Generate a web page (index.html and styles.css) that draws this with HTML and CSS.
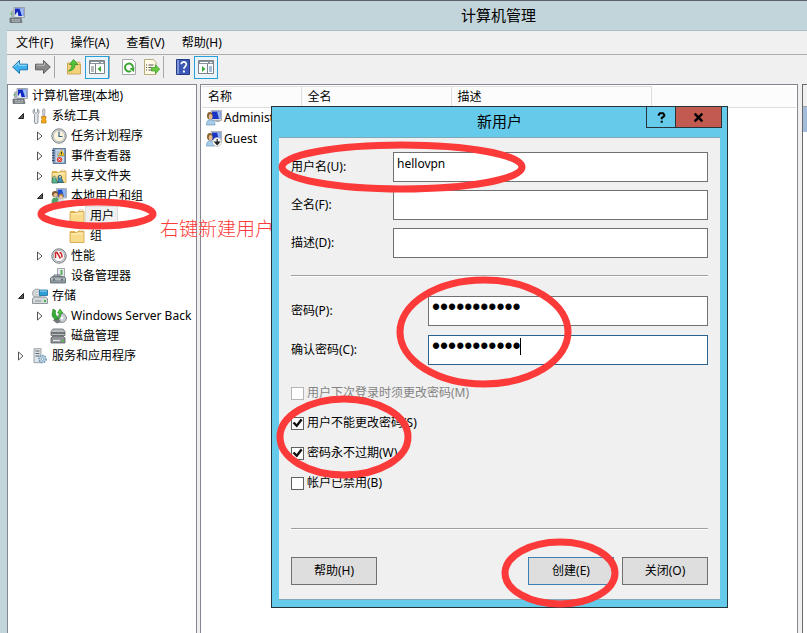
FILE: index.html
```html
<!DOCTYPE html>
<html lang="zh-CN">
<head>
    <meta charset="UTF-8">
    <meta name="viewport" content="width=device-width, initial-scale=1.0">
    <title>计算机管理</title>
    <link rel="stylesheet" href="styles.css">
</head>
<body>
    <svg class="sprite" aria-hidden="true">
        <symbol id="i-computer" viewBox="0 0 16 16">
            <path d="M5 .5h10.500v10H5z" fill="#d5d9dc" stroke="#8d969c" stroke-width=".8"/>
            <path d="M6 1.500h8.500V9H6z" fill="#1229c4"/>
            <path d="M10.500 1.500h4V9h-1.500z" fill="#9fc0f5"/>
            <path d="M2 4l3-1v7H2z" fill="#aab4b8"/>
            <path d="M1.500 6h1.500v1.500H1.500z" fill="#3fbf3f"/>
            <path d="M5 9.500l3.500-5 1 5z" fill="#dfe8f5"/>
            <path d="M1 11h11l1 4.500H1z" fill="#7c8488" stroke="#5f666a" stroke-width=".7"/>
            <path d="M3 12.500h2M6 12.500h2M9 12.500h2M3 14.200h8" stroke="#c3c9cc" stroke-width=".8"/>
        </symbol>
        <symbol id="i-tools" viewBox="0 0 16 16">
            <path d="M2.500 1v3l1.500 1.500L5.500 4V1C7.500 2 7.500 5 6 6.500V14a1.500 1.500 0 0 1-3.500 0V6.500C.5 5 .5 2 2.500 1z" fill="#e4e7e9" stroke="#7a8288" stroke-width=".8"/>
            <path d="M11 1h1.500l.5 2-.5 5h-1.500l-.5-5z" fill="#d9dcde" stroke="#8d9398" stroke-width=".7"/>
            <path d="M9.500 8.500h4.500v2l-.7.800.7 1V15h-4.500v-2.700l.7-1-.7-.8z" fill="#f5a918" stroke="#b87408" stroke-width=".7"/>
        </symbol>
        <symbol id="i-clock" viewBox="0 0 16 16">
            <circle cx="8" cy="8" r="7.200" fill="#d6d8d9" stroke="#7b8084" stroke-width="1"/>
            <circle cx="8" cy="8" r="5.600" fill="#fbf4da" stroke="#a9adaf" stroke-width=".7"/>
            <path d="M8 3.500V8.500h3.500" fill="none" stroke="#35618f" stroke-width="1.200"/>
        </symbol>
        <symbol id="i-event" viewBox="0 0 16 16">
            <path d="M2 .5h12.500v15H2z" fill="#7f9bbd" stroke="#4a6688" stroke-width=".8"/>
            <path d="M4.500 1.500H13v13H4.500z" fill="#c9d8e8"/>
            <path d="M5.500 4h3M5.500 6h2.500M5.500 8h7" stroke="#7f93ab" stroke-width=".7"/>
            <path d="M1 2.500h2.500M1 5h2.500M1 7.500h2.500M1 10h2.500M1 12.500h2.500" stroke="#35496a" stroke-width="1"/>
            <path d="M10.500 2l3 5.500h-6z" fill="#fbd12c" stroke="#a98308" stroke-width=".6"/>
            <path d="M10.500 4v2.500" stroke="#222" stroke-width=".9"/>
            <circle cx="8.500" cy="11.500" r="2.600" fill="#de3b2f"/>
            <path d="M7.400 10.500l2.200 2m0-2l-2.200 2" stroke="#fff" stroke-width=".8"/>
        </symbol>
        <symbol id="i-folder" viewBox="0 0 16 16">
            <path d="M1 3h5l1 1.500V14H1z" fill="#e7b84e"/>
            <path d="M10 2h4v3h-4z" fill="#fff" stroke="#c8b173" stroke-width=".6"/>
            <path d="M1 4.500h6.500L9 3.500h6V14.500H1z" fill="#f8dc8c" stroke="#d0a03c" stroke-width=".8"/>
            <path d="M2 5.800h12" stroke="#fff1bd" stroke-width="1"/>
        </symbol>
        <symbol id="i-share" viewBox="0 0 16 16">
            <use href="#i-folder"/>
            <path d="M1.500 9.500q2-2.500 3.500 0v1.500l2 4H1z" fill="#53b894" stroke="#26594f" stroke-width=".7"/>
            <path d="M7 8.500q2-2.500 3.500 0v2l2 4H7z" fill="#3c8fb5" stroke="#244b60" stroke-width=".7"/>
            <path d="M2.500 9.500h2M8 8.800h2" stroke="#eec49b" stroke-width="1.600"/>
        </symbol>
        <symbol id="i-user" viewBox="0 0 16 16">
            <path d="M5 .5h10.500v10H5z" fill="#d8dcdf" stroke="#929a9f" stroke-width=".7"/>
            <path d="M6 1.500h8.500V9H6z" fill="#1a35c4"/>
            <path d="M11 1.500h3.500V9H13z" fill="#93b5ee"/>
            <path d="M10 10.500h3l1 1.500h-5z" fill="#a5adb1"/>
            <ellipse cx="3.800" cy="5.800" rx="2.800" ry="3.800" fill="#8a6534"/>
            <ellipse cx="4.600" cy="6.800" rx="1.900" ry="2.700" fill="#e8bd92"/>
            <path d="M.5 15c0-4 1.500-5.200 4-5.200s4.500 1.200 4.500 5.200z" fill="#a7cdea" stroke="#6796bd" stroke-width=".7"/>
        </symbol>
        <symbol id="i-guest" viewBox="0 0 16 16">
            <use href="#i-user"/>
            <circle cx="11.200" cy="11" r="4.500" fill="#f6f6f6" stroke="#b0b0b0" stroke-width=".6"/>
            <path d="M11.200 8v5M9 11l2.200 2.500L13.400 11z" fill="#222" stroke="#222" stroke-width="1.200"/>
        </symbol>
        <symbol id="i-group" viewBox="0 0 16 16">
            <path d="M5.500.5h10v9.500h-10z" fill="#d8dcdf" stroke="#929a9f" stroke-width=".7"/>
            <path d="M6.500 1.500h8V9h-8z" fill="#1a4fd4"/>
            <path d="M11 1.500h3.500V9H13z" fill="#8db8f0"/>
            <circle cx="4" cy="6" r="3" fill="#7a5426"/>
            <circle cx="4.500" cy="7" r="2" fill="#e9be94"/>
            <path d="M.5 15c0-4 1.500-5.500 4-5.500s4 1.500 4 5.500z" fill="#4fa36a"/>
            <circle cx="10" cy="8" r="2.600" fill="#a4763a"/>
            <circle cx="10" cy="9" r="1.800" fill="#f0c9a3"/>
            <path d="M6.500 15.500c0-3.500 1.300-4.800 3.700-4.800s4 1.300 4 4.800z" fill="#d3dde6"/>
        </symbol>
        <symbol id="i-perf" viewBox="0 0 16 16">
            <circle cx="8" cy="8" r="7.200" fill="#dadcdd" stroke="#74797d" stroke-width="1"/>
            <circle cx="8" cy="8" r="5.600" fill="#fff" stroke="#8c9195" stroke-width=".7"/>
            <path d="M4.500 10V5l1.500-.5 3.500 6M8.500 4.500c1.500 0 2.500 2 2.500 5" fill="none" stroke="#c8262b" stroke-width="1.500"/>
        </symbol>
        <symbol id="i-device" viewBox="0 0 16 16">
            <path d="M7.500.5h7v9h-7z" fill="#e7eaec" stroke="#8c9499" stroke-width=".8"/>
            <path d="M10.500 2h2v5h-2z" fill="#55a95b"/>
            <path d="M4 8.500V7h6v1.500" fill="none" stroke="#59646b" stroke-width="1"/>
            <path d="M.5 10L2.500 8.500h11l2 1.500v5H.5z" fill="#8f999f" stroke="#59646b" stroke-width=".8"/>
            <path d="M1 11h14" stroke="#cfd6da" stroke-width="1"/>
            <path d="M4 10.500v2M12 10.500v2" stroke="#3d474d" stroke-width="1.200"/>
        </symbol>
        <symbol id="i-storage" viewBox="0 0 16 16">
            <circle cx="5" cy="5.500" r="4.500" fill="#d3d7da" stroke="#8e959a" stroke-width=".8"/>
            <circle cx="5" cy="5.500" r="1.300" fill="#fff" stroke="#999" stroke-width=".5"/>
            <path d="M7.500 2h8v5.500h-8z" fill="#2d9fd8" stroke="#1b6c99" stroke-width=".8"/>
            <path d="M8 3h7" stroke="#9bd9f5" stroke-width="1"/>
            <path d="M.5 10.500l2-1.500h11l2 1.500v5H.5z" fill="#d4d9dc" stroke="#798187" stroke-width=".8"/>
            <path d="M3 13h6" stroke="#8a9298"/><path d="M12 12h2v2h-2z" fill="#45b83f"/>
        </symbol>
        <symbol id="i-backup" viewBox="0 0 16 16">
            <circle cx="11" cy="10" r="4.500" fill="#c9cdd0" stroke="#72797e" stroke-width=".8"/>
            <circle cx="11" cy="10" r="1.400" fill="#fff"/>
            <path d="M6 8l4 6-4 1.500-4-3z" fill="#71797e"/>
            <path d="M1 7L2 1l2.500 1.500C4 6 5 8 7 9.500L6 12C3 11 1.500 9.500 1 7z" fill="#35ad35" stroke="#1d7b23" stroke-width=".6"/>
            <path d="M6.500 5l2.500-4 3 4h-2c0 3-1 5-2.500 6 .5-2 .7-4 .7-6z" fill="#54cc3d" stroke="#1d7b23" stroke-width=".6"/>
        </symbol>
        <symbol id="i-disk" viewBox="0 0 16 16">
            <path d="M3 1h10l2 2.500v4H1v-4z" fill="#b7bbbe" stroke="#63686c" stroke-width=".8"/>
            <path d="M1 5h14" stroke="#54595d" stroke-width="1.400"/>
            <path d="M3 8h10l2 2v5H1v-5z" fill="#8f9497" stroke="#575c60" stroke-width=".8"/>
            <path d="M3 12.500h7" stroke="#e4e6e7" stroke-width="1.200"/>
            <path d="M12 12h2v1.500h-2z" fill="#4cc23f"/>
        </symbol>
        <symbol id="i-service" viewBox="0 0 16 16">
            <path d="M2 .7h7v14H2z" fill="#dfe5e9" stroke="#858f96" stroke-width=".8"/>
            <path d="M3.500 3h4M3.500 5.500h4M3.500 8h4" stroke="#59656d" stroke-width="1"/>
            <circle cx="10.500" cy="11" r="3.500" fill="#c6dcec" stroke="#6d93b1" stroke-width="1.600" stroke-dasharray="1.600 1"/>
            <circle cx="10.500" cy="11" r="1.300" fill="#fff" stroke="#6d93b1" stroke-width=".8"/>
        </symbol>
        <symbol id="i-closed" viewBox="0 0 8 10">
            <path d="M1.500 1l4.500 4-4.500 4z" fill="#fff" stroke="#555" stroke-width="1"/>
        </symbol>
        <symbol id="i-open" viewBox="0 0 8 10">
            <path d="M6.500 2.500v5h-5z" fill="#595959" stroke="#262626" stroke-width="1"/>
        </symbol>
        <symbol id="i-back" viewBox="0 0 16 16">
            <path d="M.7 8L7.500 1.500v3.700h8v5.600h-8v3.700z" fill="#3db0ee" stroke="#2277ad" stroke-width="1"/>
            <path d="M2.500 7.500L6.700 3.700V6.300h8" fill="none" stroke="#a5e0fa" stroke-width="1"/>
        </symbol>
        <symbol id="i-forward" viewBox="0 0 16 16">
            <path d="M15.300 8L8.500 1.500v3.700h-8v5.600h8v3.700z" fill="#8a8a8a" stroke="#5f5f5f" stroke-width="1"/>
            <path d="M1.500 6.300h7.800V3.700" fill="none" stroke="#b9b9b9" stroke-width="1"/>
        </symbol>
        <symbol id="i-up" viewBox="0 0 16 16">
            <path d="M1.500 4h6L9 5.500h5.500v9.500h-13z" fill="#f3d27b" stroke="#c59b3f" stroke-width=".8"/>
            <path d="M10 3h4v2.500h-4z" fill="#f8e2a4" stroke="#c59b3f" stroke-width=".6"/>
            <path d="M2.500 12c2.500-1.500 3.500-4 3.300-6.500H3.500L7.500.5l4.500 5H9c0 4-2.500 6.500-6.500 6.500z" fill="#51c43a" stroke="#2b8a22" stroke-width=".7"/>
        </symbol>
        <symbol id="i-pane-left" viewBox="0 0 16 16">
            <path d="M.5 1.500h15v13H.5z" fill="#fff" stroke="#7b8389"/>
            <path d="M1 2h14v3H1z" fill="#8c959b"/>
            <path d="M2 3.500h8M12 3.500h2" stroke="#fff"/>
            <path d="M6.500 5v9.500" stroke="#7b8389"/>
            <path d="M2 8h3M2 10h3M2 12h3" stroke="#69747c"/>
            <path d="M12 7v6L8.500 10z" fill="#3aa935"/>
        </symbol>
        <symbol id="i-pane-right" viewBox="0 0 16 16">
            <path d="M.5 1.500h15v13H.5z" fill="#fff" stroke="#7b8389"/>
            <path d="M1 2h14v3H1z" fill="#8c959b"/>
            <path d="M2 3.500h8M12 3.500h2" stroke="#fff"/>
            <path d="M9.500 5v9.500" stroke="#7b8389"/>
            <path d="M11 8h3M11 10h3M11 12h3" stroke="#4f7fb5"/>
            <path d="M4 7v6L7.500 10z" fill="#3aa935"/>
        </symbol>
        <symbol id="i-refresh" viewBox="0 0 16 16">
            <path d="M1.500.5h10l3 3v12h-13z" fill="#fff" stroke="#a3a8ab"/>
            <path d="M12 8.500a4 4 0 1 0-2 3.500" fill="none" stroke="#39a52f" stroke-width="1.900"/>
            <path d="M8.500 9.500l4.500 3.800.3-5.300z" fill="#39a52f"/>
        </symbol>
        <symbol id="i-export" viewBox="0 0 16 16">
            <path d="M.5.5h9l2.500 3v12H.5z" fill="#fffbe6" stroke="#b9ab7d"/>
            <path d="M2 6h1M4.500 6h5M2 8.500h1M4.500 8.500h3M2 11h1M4.500 11h3" stroke="#555"/>
            <path d="M7.500 8.500h4V5.700l4.200 4.500-4.200 4.500V12h-4z" fill="#67cb3f" stroke="#3d9327" stroke-width=".7"/>
        </symbol>
        <symbol id="i-help" viewBox="0 0 16 16">
            <path d="M1.500.5h13v15h-13z" fill="#3a57b5" stroke="#263b86"/>
            <path d="M2 1h2v14H2z" fill="#7e93d8"/>
            <path d="M6.300 5.300c0-3.300 5.200-3 5 .2-.1 2-2.400 2.200-2.400 4.300" fill="none" stroke="#fff" stroke-width="1.800"/>
            <path d="M7.900 11.500h2v2h-2z" fill="#fff"/>
        </symbol>
    </svg>

    <div class="window">
        <header class="titlebar">
            <svg class="icon"><use href="#i-computer"/></svg>
            <h1>计算机管理</h1>
        </header>

        <main class="frame">
            <nav class="menubar">
                <a href="#">文件(F)</a>
                <a href="#">操作(A)</a>
                <a href="#">查看(V)</a>
                <a href="#">帮助(H)</a>
            </nav>

            <div class="toolbar">
                <button type="button" class="tool" aria-label="后退"><svg class="icon"><use href="#i-back"/></svg></button>
                <button type="button" class="tool" aria-label="前进"><svg class="icon"><use href="#i-forward"/></svg></button>
                <span class="divider"></span>
                <button type="button" class="tool" aria-label="向上一级"><svg class="icon"><use href="#i-up"/></svg></button>
                <button type="button" class="tool active" aria-label="显示/隐藏控制台树"><svg class="icon"><use href="#i-pane-left"/></svg></button>
                <span class="divider"></span>
                <button type="button" class="tool" aria-label="刷新"><svg class="icon"><use href="#i-refresh"/></svg></button>
                <button type="button" class="tool" aria-label="导出列表"><svg class="icon"><use href="#i-export"/></svg></button>
                <span class="divider"></span>
                <button type="button" class="tool" aria-label="帮助"><svg class="icon"><use href="#i-help"/></svg></button>
                <button type="button" class="tool active" aria-label="显示/隐藏操作窗格"><svg class="icon"><use href="#i-pane-right"/></svg></button>
            </div>

            <div class="panes">
                <div class="tree">
                    <div class="node root"><svg class="icon"><use href="#i-computer"/></svg><span>计算机管理(本地)</span></div>
                    <ul>
                        <li>
                            <div class="node"><svg class="arrow"><use href="#i-open"/></svg><svg class="icon"><use href="#i-tools"/></svg><span>系统工具</span></div>
                            <ul>
                                <li><div class="node"><svg class="arrow"><use href="#i-closed"/></svg><svg class="icon"><use href="#i-clock"/></svg><span>任务计划程序</span></div></li>
                                <li><div class="node"><svg class="arrow"><use href="#i-closed"/></svg><svg class="icon"><use href="#i-event"/></svg><span>事件查看器</span></div></li>
                                <li><div class="node"><svg class="arrow"><use href="#i-closed"/></svg><svg class="icon"><use href="#i-share"/></svg><span>共享文件夹</span></div></li>
                                <li>
                                    <div class="node"><svg class="arrow"><use href="#i-open"/></svg><svg class="icon"><use href="#i-group"/></svg><span>本地用户和组</span></div>
                                    <ul>
                                        <li><div class="node leaf selected"><svg class="icon"><use href="#i-folder"/></svg><span>用户</span></div></li>
                                        <li><div class="node leaf"><svg class="icon"><use href="#i-folder"/></svg><span>组</span></div></li>
                                    </ul>
                                </li>
                                <li><div class="node"><svg class="arrow"><use href="#i-closed"/></svg><svg class="icon"><use href="#i-perf"/></svg><span>性能</span></div></li>
                                <li><div class="node leaf"><svg class="icon"><use href="#i-device"/></svg><span>设备管理器</span></div></li>
                            </ul>
                        </li>
                        <li>
                            <div class="node"><svg class="arrow"><use href="#i-open"/></svg><svg class="icon"><use href="#i-storage"/></svg><span>存储</span></div>
                            <ul>
                                <li><div class="node"><svg class="arrow"><use href="#i-closed"/></svg><svg class="icon"><use href="#i-backup"/></svg><span>Windows Server Back</span></div></li>
                                <li><div class="node leaf"><svg class="icon"><use href="#i-disk"/></svg><span>磁盘管理</span></div></li>
                            </ul>
                        </li>
                        <li><div class="node"><svg class="arrow"><use href="#i-closed"/></svg><svg class="icon"><use href="#i-service"/></svg><span>服务和应用程序</span></div></li>
                    </ul>
                </div>

                <div class="list">
                    <table>
                        <colgroup>
                            <col class="col-name"><col class="col-full"><col class="col-desc"><col>
                        </colgroup>
                        <thead>
                            <tr><th>名称</th><th>全名</th><th>描述</th><td></td></tr>
                        </thead>
                        <tbody>
                            <tr><td><div class="user"><svg class="icon"><use href="#i-user"/></svg>Administrator</div></td><td></td><td></td><td></td></tr>
                            <tr><td><div class="user"><svg class="icon"><use href="#i-guest"/></svg>Guest</div></td><td></td><td></td><td></td></tr>
                        </tbody>
                    </table>
                </div>

                <aside class="actions">
                    <div class="actions-head"></div>
                    <div class="actions-item"></div>
                </aside>
            </div>
        </main>
    </div>

    <p class="note">右键新建用户</p>

    <section class="dialog" role="dialog" aria-labelledby="dialogTitle">
        <div class="dialog-title">
            <h2 id="dialogTitle">新用户</h2>
            <div class="caption">
                <button type="button" class="caption-help" aria-label="帮助"><svg viewBox="0 0 10 10"><path d="M2.500 3.500V2.500L3.500 1.200h3L7.500 2.500v1.200L5.200 5.500v1.200M5.200 8v1.700" fill="none" stroke="#000" stroke-width="1.800"/></svg></button>
                <button type="button" class="caption-close" aria-label="关闭"><svg viewBox="0 0 10 10"><path d="M1.500 1.500l7 7M8.500 1.500l-7 7" stroke="#000" stroke-width="2.200"/></svg></button>
            </div>
        </div>

        <form class="dialog-body">
            <div class="fields">
                <label for="userName">用户名(U):</label>
                <input type="text" id="userName" value="hellovpn">
                <label for="fullName">全名(F):</label>
                <input type="text" id="fullName">
                <label for="description">描述(D):</label>
                <input type="text" id="description">
            </div>
            <hr>
            <div class="fields passwords">
                <label for="password">密码(P):</label>
                <input type="password" id="password" value="abcdefghijk">
                <label for="confirm">确认密码(C):</label>
                <div class="focused">
                    <input type="password" id="confirm" value="abcdefghijk">
                    <span class="caret"></span>
                </div>
            </div>
            <div class="checks">
                <label class="disabled"><input type="checkbox" disabled>用户下次登录时须更改密码(M)</label>
                <label><input type="checkbox" checked>用户不能更改密码(S)</label>
                <label><input type="checkbox" checked>密码永不过期(W)</label>
                <label><input type="checkbox">帐户已禁用(B)</label>
            </div>
            <hr>
            <div class="buttons">
                <button type="button" class="btn help">帮助(H)</button>
                <button type="button" class="btn primary">创建(E)</button>
                <button type="button" class="btn">关闭(O)</button>
            </div>
        </form>
    </section>

    <!-- hand-drawn rings that mark each step -->
    <svg class="rings" aria-hidden="true">
        <ellipse cx="97" cy="214" rx="56" ry="12"/>
        <ellipse cx="402" cy="167" rx="120" ry="22"/>
        <ellipse cx="484" cy="332" rx="84" ry="52"/>
        <ellipse cx="344" cy="437" rx="64" ry="38"/>
        <ellipse cx="560" cy="573" rx="55" ry="31"/>
    </svg>
</body>
</html>
```
FILE: styles.css
```css
* {
    box-sizing: border-box;
}

body {
    margin: 0;
    position: relative;
    overflow: hidden;
    font-family: "Noto Sans", "Noto Sans CJK SC", sans-serif;
    font-size: 12px;
    line-height: 20px;
    color: #000;
}

button,
input {
    font: inherit;
    color: inherit;
    margin: 0;
}

ul {
    list-style: none;
    margin: 0;
    padding: 0;
}

.sprite {
    position: absolute;
    width: 0;
    height: 0;
}

.icon {
    display: block;
    width: 16px;
    height: 16px;
    flex: none;
}

/* main window */
.window {
    display: flex;
    flex-direction: column;
    min-height: 100vh;
    padding-left: 7px;
    background-color: #c2d5da;
    border-top: 1px solid #5e6069;
}

.titlebar {
    display: flex;
    align-items: center;
    height: 29px;
    padding-left: 2px;
    padding-bottom: 2px;
}

.titlebar h1 {
    flex: 1;
    margin: 0;
    padding-left: 165px;
    font-size: 15px;
    font-weight: normal;
    text-align: center;
}

.frame {
    flex: 1;
    display: flex;
    flex-direction: column;
    background-color: #f0f0f0;
    border-top: 1px solid #aebdc2;
}

.menubar {
    display: flex;
    gap: 17px;
    height: 24px;
    padding: 2px 9px;
    border-bottom: 1px solid #adadad;
}

.menubar a {
    color: #000;
    text-decoration: none;
}

.toolbar {
    display: flex;
    align-items: center;
    height: 29px;
    padding-left: 1px;
    padding-bottom: 5px;
}

.tool {
    display: flex;
    align-items: center;
    justify-content: center;
    width: 23px;
    height: 23px;
    padding: 0;
    background: none;
    border: 1px solid transparent;
}

.tool.active {
    width: 24px;
    background-color: #e9f4fa;
    border-color: #26a0da;
}

.divider {
    width: 1px;
    height: 22px;
    background-color: #a7a7a7;
}

.divider + .tool {
    margin-left: 7px;
}

.panes {
    flex: 1;
    display: flex;
}

/* console tree */
.tree {
    width: 190px;
    flex: none;
    margin-right: 3px;
    padding-top: 1px;
    overflow: hidden;
    background-color: #fff;
    border: 1px solid #828790;
    border-bottom: none;
}

.tree ul ul {
    padding-left: 19px;
}

.node {
    display: flex;
    align-items: center;
    height: 20px;
    padding-left: 8px;
    white-space: nowrap;
}

.node span {
    padding: 0 4px;
}

.node.root {
    padding-left: 4px;
}

.node.leaf {
    padding-left: 23px;
}

.node.leaf span {
    padding-left: 5px;
}

.node.selected span {
    background-color: #f0f0f0;
    outline: 1px solid #dcdcdc;
    outline-offset: -1px;
}

.arrow {
    width: 8px;
    height: 10px;
    margin: 0 7px 0 1px;
    flex: none;
}

/* user list */
.list {
    flex: 1;
    min-width: 0;
    padding: 1px;
    overflow: hidden;
    background-color: #fff;
    border: 1px solid #828790;
    border-bottom: none;
}

table {
    width: 100%;
    table-layout: fixed;
    border-collapse: collapse;
}

.col-name {
    width: 99px;
}

.col-full {
    width: 150px;
}

.col-desc {
    width: 200px;
}

thead th,
thead td {
    height: 20px;
    padding: 0 6px;
    background-color: #fcfcfc;
    border-bottom: 1px solid #dedede;
}

thead th {
    font-weight: normal;
    text-align: left;
    border-top: 1px solid #dedede;
    border-right: 1px solid #dedede;
}

tbody td {
    padding: 0 4px;
    height: 21px;
    overflow: hidden;
}

.user {
    display: flex;
    align-items: center;
    gap: 2px;
}

.actions {
    width: 5px;
    flex: none;
    margin-left: 4px;
    background-color: #fff;
    border-top: 1px solid #696969;
    border-left: 1px solid #696969;
}

.actions-head {
    height: 22px;
    background-color: #f0f0f0;
    border-bottom: 1px solid #a0a0a0;
}

.actions-item {
    height: 25px;
    background-color: #a3bcdb;
}

.note {
    position: absolute;
    left: 160px;
    top: 219px;
    margin: 0;
    font-size: 19px;
    font-weight: 300;
    color: #fc3a39;
}

/* new user dialog */
.dialog {
    position: absolute;
    left: 271px;
    top: 106px;
    width: 457px;
    padding: 0 7px 7px;
    background-color: #66cbea;
    border: 1px solid #26343a;
}

.dialog-title {
    position: relative;
    height: 30px;
}

.dialog-title h2 {
    margin: 0;
    font-size: 15px;
    font-weight: normal;
    line-height: 28px;
    text-align: center;
}

.caption {
    position: absolute;
    top: -1px;
    right: -2px;
    display: flex;
}

.caption button {
    display: flex;
    align-items: center;
    justify-content: center;
    height: 22px;
    padding: 0;
    border: 1px solid #26343a;
}

.caption svg {
    width: 11px;
    height: 11px;
}

.caption .caption-help {
    width: 29px;
    background-color: #66cbea;
    border-right: none;
}

.caption .caption-close {
    width: 47px;
    background-color: #c35a50;
}

.dialog-body {
    padding: 14px 12px;
    background-color: #f0f0f0;
    border-top: 1px solid #7fa9b8;
    border-bottom: 1px solid #7fa9b8;
}

.fields {
    display: grid;
    grid-template-columns: 102px 1fr;
    align-items: center;
    row-gap: 8px;
}

.fields.passwords {
    grid-template-columns: 137px 1fr;
    row-gap: 9px;
}

.fields input {
    display: block;
    width: 100%;
    height: 30px;
    padding: 0 3px 7px;
    background-color: #fff;
    border: 1px solid #707070;
    border-radius: 0;
    outline: none;
}

.fields input[type="password"] {
    font-family: "Liberation Sans", sans-serif;
    font-size: 23px;
}

.focused {
    position: relative;
}

.fields .focused input {
    border-color: #2b6390;
}

.caret {
    position: absolute;
    left: 92px;
    top: 3px;
    width: 1px;
    height: 17px;
    background-color: #000;
}

hr {
    height: 2px;
    margin: 17px 0 19px;
    border: none;
    border-top: 1px solid #a0a0a0;
    border-bottom: 1px solid #fff;
}

.checks {
    display: flex;
    flex-direction: column;
    align-items: flex-start;
    gap: 10px;
    margin-top: 18px;
}

.checks label {
    display: flex;
    align-items: center;
    gap: 3px;
}

.checks .disabled {
    color: #838383;
}

.checks input {
    appearance: none;
    width: 13px;
    height: 13px;
    background-color: #fff;
    border: 1px solid #606060;
}

.checks input:disabled {
    border-color: #b5b5b5;
}

.checks input:checked::before {
    content: "";
    display: block;
    height: 11px;
    background-color: #111;
    clip-path: polygon(6% 52%, 22% 38%, 42% 60%, 80% 10%, 96% 24%, 44% 92%);
}

.checks + hr {
    margin: 35px 0 27px;
}

.buttons {
    display: flex;
    gap: 8px;
}

.btn {
    width: 86px;
    height: 28px;
    padding: 0;
    background-color: #dedede;
    border: 1px solid #707070;
}

.btn.help {
    margin-right: auto;
}

.btn.primary {
    border-color: #3c7fb1;
}

.rings {
    position: absolute;
    left: 0;
    top: 0;
    width: 100%;
    height: 100%;
    pointer-events: none;
    fill: none;
    stroke: #fc3a39;
    stroke-width: 7px;
}
```
